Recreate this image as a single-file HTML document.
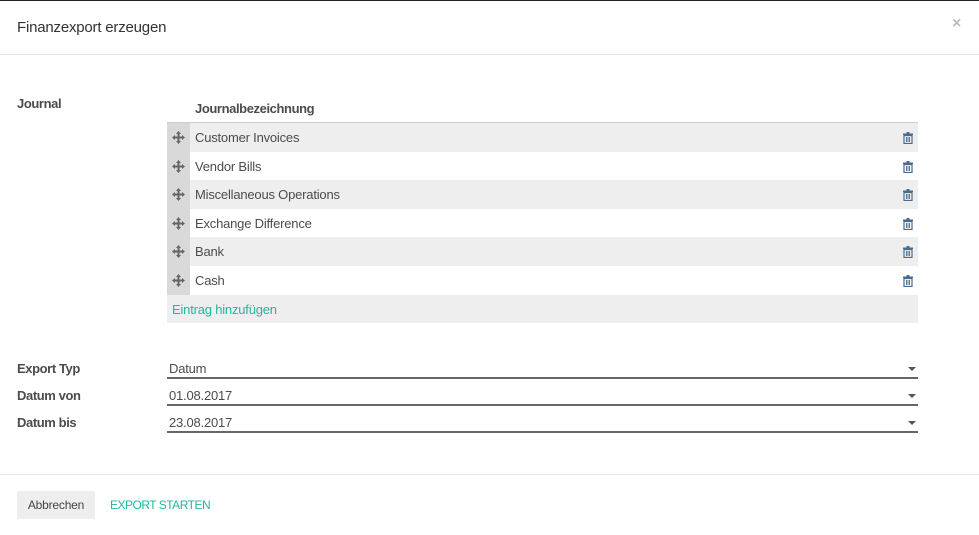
<!DOCTYPE html><html><head><style>
body{margin:0;width:979px;height:535px;background:#fff;font-family:"Liberation Sans",sans-serif;position:relative;overflow:hidden;color:#4c4c4c;letter-spacing:-0.2px}
.a{position:absolute}
.lbl{font-weight:bold;font-size:13px;color:#4c4c4c;letter-spacing:-0.4px}
.row{position:absolute;left:167px;width:751px;height:29px;font-size:13px}
.row .h{position:absolute;left:0;top:0;width:23px;height:100%;background:#d9d9d9}
.row .t{position:absolute;left:28px;top:7px;color:#4c4c4c}
.g{background:#eeeeee}
.f{position:absolute;left:167px;width:751px;border-bottom:2px solid #666;font-size:13px;height:15px}
.f span{position:absolute;left:2px;top:-1px}
.f i{position:absolute;right:2px;top:5px;width:0;height:0;border-left:4px solid transparent;border-right:4px solid transparent;border-top:4px solid #555}
</style></head><body>
<div class="a" style="left:0;top:0;width:979px;height:1px;background:#2a1f28"></div>
<div class="a" style="left:17px;top:19px;font-size:15px;color:#333">Finanzexport erzeugen</div>
<div class="a" style="left:952px;top:15px;font-size:16px;color:#bbb;font-weight:bold">×</div>
<div class="a" style="left:0;top:54px;width:979px;height:1px;background:#e5e5e5"></div>
<div class="a lbl" style="left:17px;top:96px">Journal</div>
<div class="a lbl" style="left:195px;top:101px">Journalbezeichnung</div>
<div class="a" style="left:167px;top:122px;width:751px;height:1px;background:#ccc"></div>
<div id="rows"></div>
<div class="f" style="top:362px"><span>Datum</span><i></i></div>
<div class="f" style="top:389px"><span>01.08.2017</span><i></i></div>
<div class="f" style="top:416px"><span>23.08.2017</span><i></i></div>
<div class="a lbl" style="left:17px;top:361px">Export Typ</div>
<div class="a lbl" style="left:17px;top:388px">Datum von</div>
<div class="a lbl" style="left:17px;top:415px">Datum bis</div>
<div class="a" style="left:0;top:474px;width:979px;height:1px;background:#e5e5e5"></div>
<div class="a" style="left:17px;top:491px;width:78px;height:28px;background:#eee;font-size:12px;color:#444;text-align:center;line-height:28px">Abbrechen</div>
<div class="a" style="left:110px;top:498px;font-size:12px;color:#21b799;letter-spacing:-0.5px">EXPORT STARTEN</div>
<script>
var n=["Customer Invoices","Vendor Bills","Miscellaneous Operations","Exchange Difference","Bank","Cash"],h="";
var tops=[123,151.5,180,208.5,237,265.5];
var mv='<svg width="13" height="13" viewBox="0 0 13 13" style="position:absolute;left:5px;top:8px"><path d="M6.5 0L9 3H7.5V5.5H10V4L13 6.5L10 9V7.5H7.5V10H9L6.5 13L4 10H5.5V7.5H3V9L0 6.5L3 4V5.5H5.5V3H4Z" fill="#666"/></svg>';
var tr='<svg width="10" height="12" viewBox="0 0 10 12" style="position:absolute;right:5px;top:9px"><rect x="0" y="1.5" width="10" height="1.5" fill="#4a6b8c"/><rect x="3.5" y="0" width="3" height="2" fill="#4a6b8c"/><path d="M1 3.5h8v8H1z" fill="none" stroke="#4a6b8c" stroke-width="1.2"/><path d="M3.5 5v5M5 5v5M6.5 5v5" stroke="#4a6b8c" stroke-width="0.9"/></svg>';
for(var i=0;i<6;i++)h+='<div class="row'+(i%2==0?' g':'')+'" style="top:'+tops[i]+'px"><div class="h">'+mv+'</div><div class="t">'+n[i]+'</div>'+tr+'</div>';
h+='<div class="row g" style="top:294.5px;height:28.5px"><div class="t" style="left:5px;color:#21b799">Eintrag hinzufügen</div></div>';
document.getElementById("rows").innerHTML=h;
</script>
</body></html>
